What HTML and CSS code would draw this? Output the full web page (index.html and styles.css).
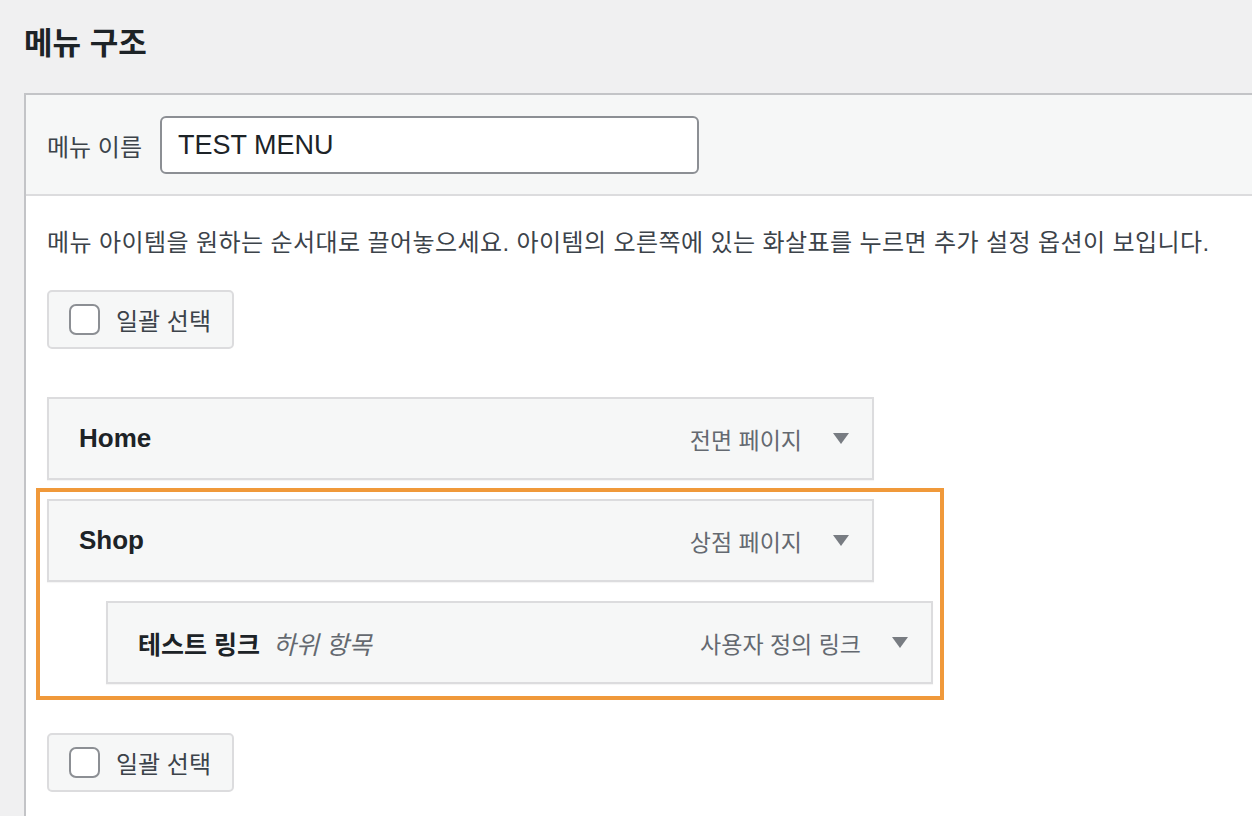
FILE: index.html
```html
<!DOCTYPE html>
<html lang="ko">
<head>
<meta charset="utf-8">
<title>메뉴 구조</title>
<link rel="stylesheet" href="styles.css">
</head>
<body>
<div class="page">
  <h2 class="page-title">메뉴 구조</h2>
  <div class="panel">
    <div class="panel-header">
      <label class="name-label" for="menu-name">메뉴 이름</label>
      <input class="name-input" id="menu-name" type="text" value="TEST MENU">
    </div>
    <div class="panel-body">
      <p class="desc">메뉴 아이템을 원하는 순서대로 끌어놓으세요. 아이템의 오른쪽에 있는 화살표를 누르면 추가 설정 옵션이 보입니다.</p>
      <label class="bulk"><span class="check"></span><span class="bulk-text">일괄 선택</span></label>

      <ul class="menu-list">
        <li class="item">
          <span class="item-title">Home</span>
          <span class="item-type">전면 페이지</span>
          <span class="arrow"></span>
        </li>
        <li class="highlight">
          <div class="item">
            <span class="item-title">Shop</span>
            <span class="item-type">상점 페이지</span>
            <span class="arrow"></span>
          </div>
          <div class="item item-sub">
            <span class="item-title">테스트 링크 <em class="sub-label">하위 항목</em></span>
            <span class="item-type">사용자 정의 링크</span>
            <span class="arrow"></span>
          </div>
        </li>
      </ul>

      <label class="bulk bulk-bottom"><span class="check"></span><span class="bulk-text">일괄 선택</span></label>
    </div>
  </div>
</div>
</body>
</html>
```

FILE: styles.css
```css
* { box-sizing: border-box; }

html, body {
  margin: 0;
  padding: 0;
  background: #f0f0f1;
  height: 100%;
  overflow: hidden;
}

body {
  font-family: "Liberation Sans", "Noto Sans CJK KR", sans-serif;
  color: #3c434a;
}

.page {
  padding-left: 24px;
  padding-top: 1px;
}

.page-title {
  margin: 24px 0 0 0;
  font-size: 31px;
  line-height: 38px;
  font-weight: 700;
  color: #1d2327;
}

.panel {
  margin-top: 30px;
  border-left: 2px solid #c3c4c7;
  border-top: 2px solid #c3c4c7;
  background: #fff;
  height: 740px;
}

.panel-header {
  display: flex;
  align-items: center;
  background: #f6f7f7;
  border-bottom: 2px solid #dcdcde;
  padding: 21px 0 20px 21px;
}

.name-label {
  font-size: 24px;
  color: #3c434a;
  margin-right: 18px;
}

.name-input {
  width: 539px;
  height: 58px;
  border: 2px solid #8c8f94;
  border-radius: 6px;
  background: #fff;
  padding: 0 16px;
  font-family: "Liberation Sans", sans-serif;
  font-size: 27px;
  color: #1d2327;
  outline: none;
}

.panel-body {
  padding: 0 0 0 21px;
}

.desc {
  margin: 30px 0 0;
  font-size: 24px;
  line-height: 34px;
  letter-spacing: 0.4px;
  color: #3c434a;
}

.bulk {
  display: flex;
  align-items: center;
  width: 187px;
  height: 59px;
  margin-top: 30px;
  border: 2px solid #dcdcde;
  border-radius: 5px;
  background: #f6f7f7;
  padding-left: 20px;
}

.check {
  width: 31px;
  height: 31px;
  border: 2px solid #8c8f94;
  border-radius: 7px;
  background: #fff;
  margin-right: 16px;
}

.bulk-text {
  font-size: 24px;
  color: #3c434a;
}

.menu-list {
  list-style: none;
  margin: 48px 0 0;
  padding: 0;
  width: 907px;
}

.item {
  display: flex;
  align-items: center;
  width: 827px;
  height: 83px;
  border: 2px solid #dcdcde;
  background: #f6f7f7;
  box-shadow: 0 1px 1px rgba(0,0,0,0.04);
  padding: 0 23px 0 30px;
}

.item-title {
  flex: 1;
  font-size: 26px;
  font-weight: 700;
  color: #1d2327;
}

.sub-label {
  font-size: 25px;
  font-weight: 400;
  font-style: italic;
  color: #646970;
  margin-left: 6px;
}

.item-type {
  font-size: 23px;
  color: #646970;
  margin-right: 31px;
}

.arrow {
  width: 0;
  height: 0;
  border-left: 8px solid transparent;
  border-right: 8px solid transparent;
  border-top: 11px solid #787c82;
}

.highlight {
  margin: 8px 0 0 -11px;
  border: 4px solid #f0993a;
  padding: 7px 7px 12px 7px;
  width: 908px;
}

.highlight .item + .item {
  margin-top: 19px;
}

.item-sub {
  margin-left: 59px;
}

.item-sub .item-title {
  font-size: 25px;
}

.bulk-bottom {
  margin-top: 33px;
}
```
